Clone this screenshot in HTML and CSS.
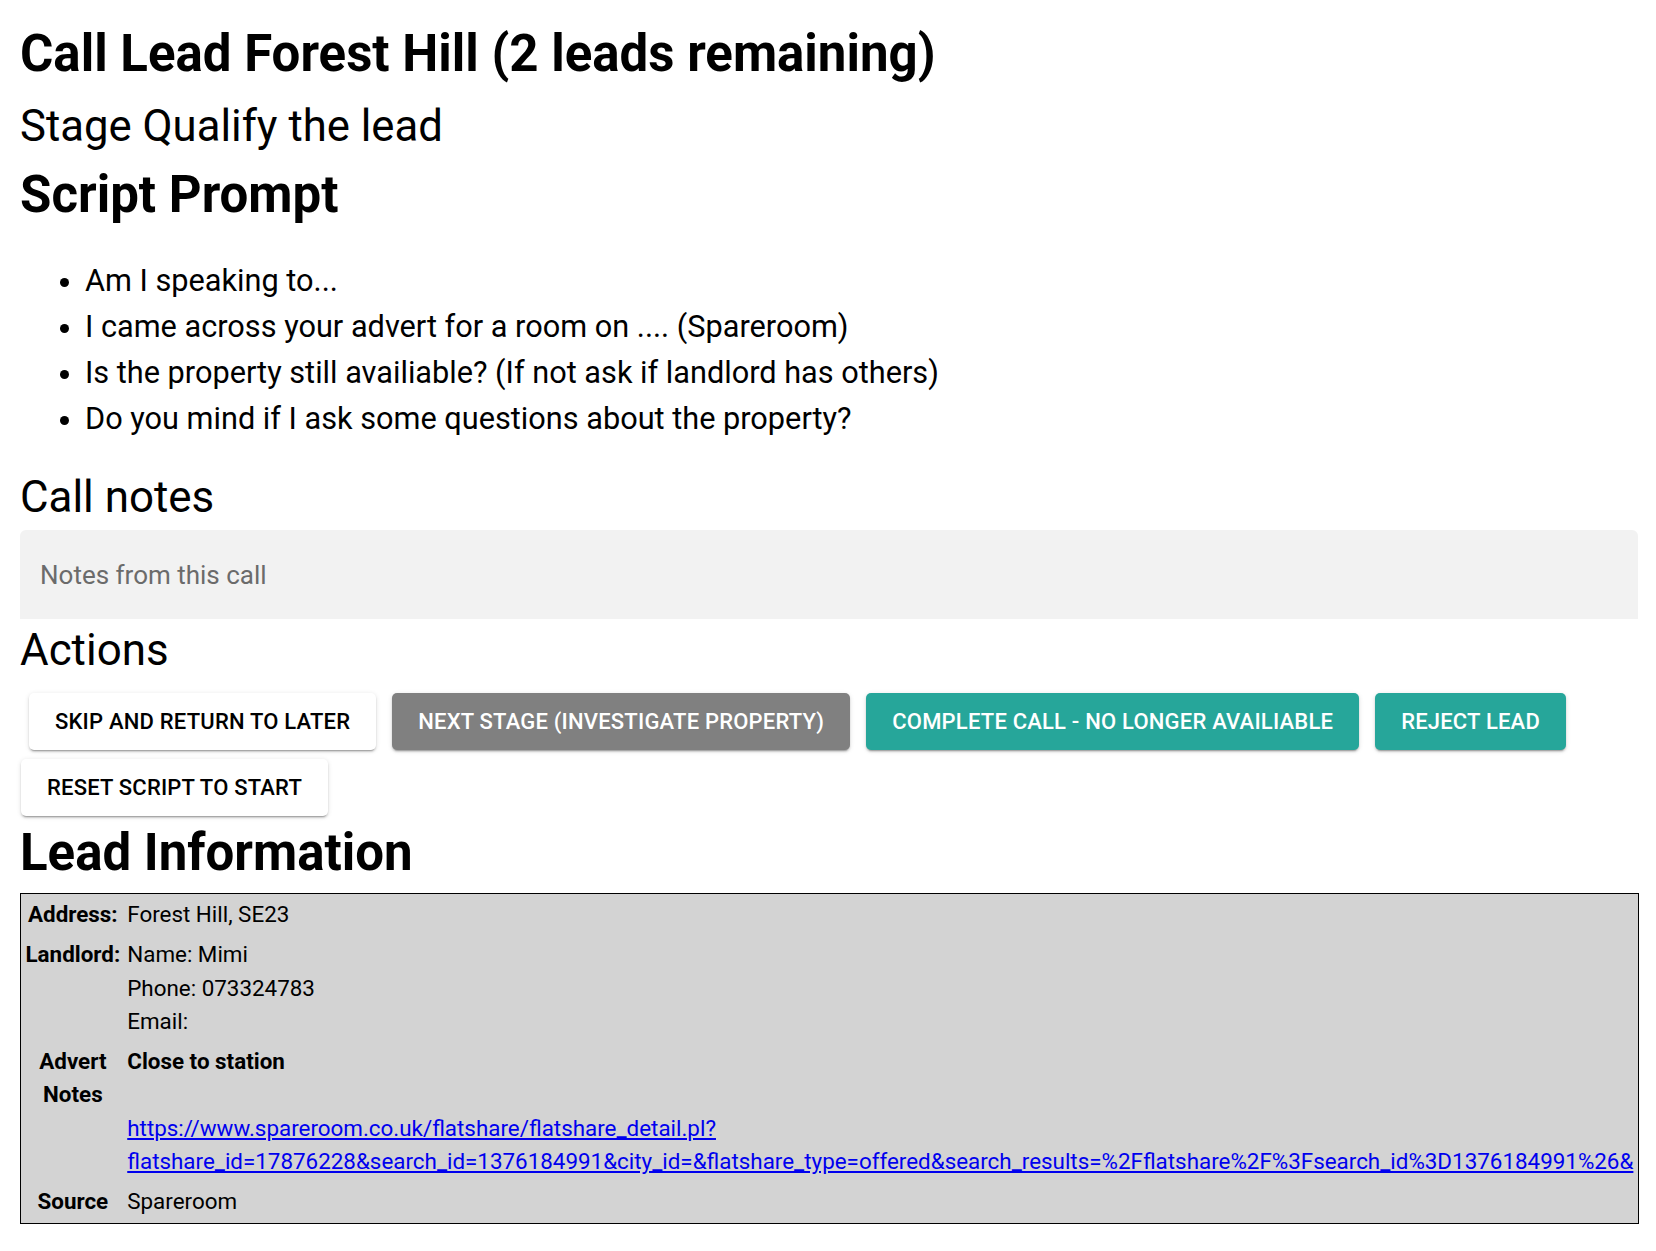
FILE: index.html
```html
<!DOCTYPE html>
<html lang="en">
<head>
<meta charset="utf-8">
<title>Call Lead</title>
<link rel="stylesheet" href="styles.css">
</head>
<body>
<div class="page">
  <h1 class="title">Call Lead Forest Hill (2 leads remaining)</h1>
  <h2 class="stage">Stage Qualify the lead</h2>
  <h2 class="section-title">Script Prompt</h2>
  <ul class="prompts">
    <li>Am I speaking to...</li>
    <li>I came across your advert for a room on .... (Spareroom)</li>
    <li>Is the property still availiable? (If not ask if landlord has others)</li>
    <li>Do you mind if I ask some questions about the property?</li>
  </ul>
  <h3 class="sub">Call notes</h3>
  <div class="notes">
    <textarea class="notes-input" rows="1" placeholder="Notes from this call"></textarea>
  </div>
  <h3 class="sub actions-title">Actions</h3>
  <div class="btn-row">
    <button class="btn btn-white">Skip and return to later</button>
    <button class="btn btn-grey">Next stage (Investigate property)</button>
    <button class="btn btn-teal">Complete call - no longer availiable</button>
    <button class="btn btn-teal">Reject lead</button>
  </div>
  <div class="btn-row second">
    <button class="btn btn-white">Reset script to start</button>
  </div>
  <h2 class="section-title lead-title">Lead Information</h2>
  <table class="lead-table">
    <tbody>
      <tr>
        <th>Address:</th>
        <td>Forest Hill, SE23</td>
      </tr>
      <tr>
        <th>Landlord:</th>
        <td>
          <div>Name: Mimi</div>
          <div>Phone: 073324783</div>
          <div>Email:</div>
        </td>
      </tr>
      <tr>
        <th>Advert Notes</th>
        <td>
          <div class="strong">Close to station</div>
          <div class="blank">&nbsp;</div>
          <div><a href="#">https://www.spareroom.co.uk/flatshare/flatshare_detail.pl?flatshare_id=17876228&amp;search_id=1376184991&amp;city_id=&amp;flatshare_type=offered&amp;search_results=%2Fflatshare%2F%3Fsearch_id%3D1376184991%26&amp;</a></div>
        </td>
      </tr>
      <tr>
        <th>Source</th>
        <td>Spareroom</td>
      </tr>
    </tbody>
  </table>
</div>
</body>
</html>
```
FILE: styles.css
```css
html, body {
  margin: 0;
  padding: 0;
  background: #ffffff;
}

body {
  font-family: Roboto, "Liberation Sans", Arial, sans-serif;
  color: #000000;
}

.page {
  margin-left: 20px;
  width: 1618px;
  padding-bottom: 26px;
}

.title {
  font-size: 51px;
  font-weight: 700;
  line-height: 60px;
  margin: 24px 0 0;
}

.stage {
  font-size: 43.7px;
  font-weight: 400;
  line-height: 50px;
  margin: 17px 0 0;
}

.section-title {
  font-size: 51px;
  font-weight: 700;
  line-height: 60px;
  margin: 14px 0 0;
}

.prompts {
  margin: 33px 0 0;
  padding-left: 65px;
  font-size: 30.7px;
  line-height: 46px;
}

.sub {
  font-size: 43.9px;
  font-weight: 400;
  line-height: 50px;
  margin: 30px 0 0;
}

.notes {
  margin-top: 8px;
  height: 89px;
  background: #f2f2f2;
  border-radius: 6px 6px 0 0;
  display: flex;
  align-items: center;
  padding: 0 20px;
  box-sizing: border-box;
}

.notes-input {
  flex: 1;
  border: none;
  outline: none;
  background: transparent;
  resize: none;
  overflow: hidden;
  padding: 0;
  margin: 0;
  height: 30px;
  font-family: Roboto, "Liberation Sans", Arial, sans-serif;
  font-size: 26px;
  line-height: 30px;
  color: #000;
}

.notes-input::placeholder {
  color: #6b6b6b;
  opacity: 1;
}

.actions-title {
  margin-top: 6px;
}

.btn-row {
  display: flex;
  gap: 16px;
  padding-left: 9px;
  margin-top: 18px;
}

.btn-row.second {
  padding-left: 1px;
  margin-top: 8.6px;
}

.btn {
  height: 57.4px;
  padding: 0 26px;
  border: none;
  border-radius: 5px;
  font-family: Roboto, "Liberation Sans", Arial, sans-serif;
  font-size: 22px;
  font-weight: 500;
  letter-spacing: 0.2px;
  text-transform: uppercase;
  cursor: pointer;
  box-shadow: 0 3px 1px -2px rgba(0, 0, 0, 0.2), 0 2px 2px 0 rgba(0, 0, 0, 0.14), 0 1px 5px 0 rgba(0, 0, 0, 0.12);
}

.btn-white {
  background: #ffffff;
  color: #000000;
}

.btn-grey {
  background: #808080;
  color: #ffffff;
}

.btn-teal {
  background: #26a69a;
  color: #ffffff;
}

.lead-title {
  margin-top: 7px;
}

.lead-table {
  margin-top: 9.5px;
  width: 100%;
  background: #d3d3d3;
  border: 1px solid #000000;
  border-spacing: 2px;
  font-size: 22.4px;
  line-height: 33.3px;
}

.lead-table th,
.lead-table td {
  vertical-align: top;
  padding: 2.4px 2.5px;
}

.lead-table th {
  font-weight: 700;
  text-align: center;
}

.lead-table td {
  text-align: left;
}

.lead-table .strong {
  font-weight: 700;
}

.lead-table a {
  color: #0000ee;
  text-decoration: underline;
}
```
